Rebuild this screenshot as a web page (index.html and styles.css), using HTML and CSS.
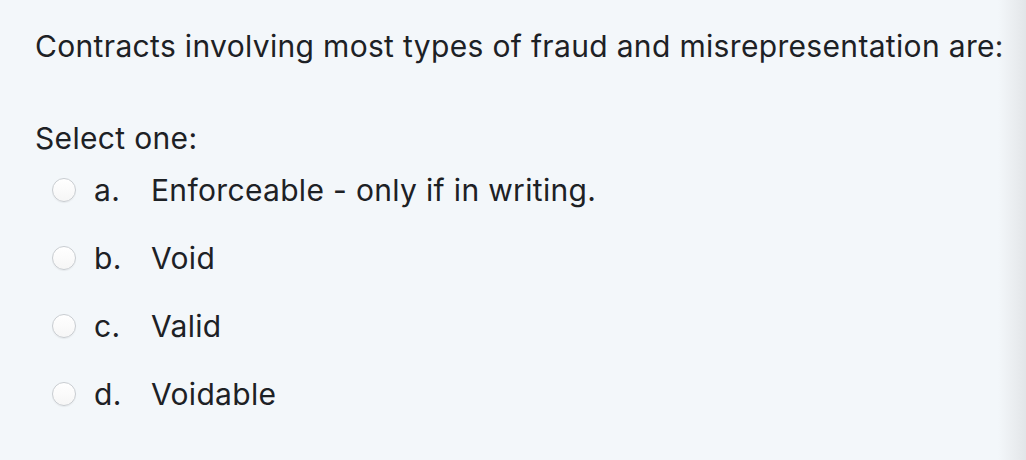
FILE: index.html
```html
<!DOCTYPE html>
<html>
<head>
<meta charset="utf-8">
<link rel="stylesheet" href="styles.css">
</head>
<body>
<div class="page">
  <div class="question">
    <p class="qtext">Contracts involving most types of fraud and misrepresentation are:</p>
    <p class="prompt">Select one:</p>
    <div class="answers">
      <label class="answer"><span class="radio"></span><span class="letter">a.</span><span class="label">Enforceable - only if in writing.</span></label>
      <label class="answer"><span class="radio"></span><span class="letter">b.</span><span class="label">Void</span></label>
      <label class="answer"><span class="radio"></span><span class="letter">c.</span><span class="label">Valid</span></label>
      <label class="answer"><span class="radio"></span><span class="letter">d.</span><span class="label">Voidable</span></label>
    </div>
  </div>
  <div class="edge"></div>
</div>
</body>
</html>
```
FILE: styles.css
```css
html, body {
  margin: 0;
  padding: 0;
}
body {
  background: #f3f7fa;
  font-family: Inter, "Noto Sans", sans-serif;
  color: #1d2125;
  width: 1026px;
  height: 460px;
  overflow: hidden;
  font-size: 30px;
  letter-spacing: 0.33px;
}
.page {
  display: flex;
  height: 460px;
}
.question {
  flex: 1;
  min-width: 0;
  padding: 0 0 0 35px;
}
.edge {
  width: 28px;
  flex: none;
  background: linear-gradient(to right, rgba(228,231,234,0) 0%, #e8ebee 70%, #e2e5e8 100%);
}
.qtext {
  margin: 28px 0 0 0;
  line-height: 36px;
  white-space: nowrap;
}
.prompt {
  margin: 56px 0 0 0;
  line-height: 36px;
}
.answers {
  display: flex;
  flex-direction: column;
}
.answer {
  display: flex;
  align-items: center;
  height: 68px;
}
.radio {
  width: 24px;
  height: 24px;
  border-radius: 50%;
  border: 1px solid #c9cdd1;
  background: linear-gradient(#ffffff, #f6f6f6);
  margin-left: 17px;
  box-sizing: border-box;
  box-shadow: 0 1px 1px rgba(0,0,0,0.05);
}
.letter {
  margin-left: 18px;
  width: 57px;
}
```
